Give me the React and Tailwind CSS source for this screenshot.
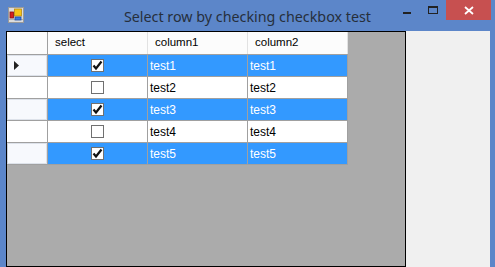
import React from 'react'

const ROWS = [
  { checked: true, c1: 'test1', c2: 'test1', selected: true, current: true },
  { checked: false, c1: 'test2', c2: 'test2', selected: false },
  { checked: true, c1: 'test3', c2: 'test3', selected: true },
  { checked: false, c1: 'test4', c2: 'test4', selected: false },
  { checked: true, c1: 'test5', c2: 'test5', selected: true },
]

function AppIcon() {
  return (
    <svg width="16" height="16" viewBox="0 0 16 16">
      <rect x="0.5" y="0.5" width="15" height="15" fill="#dcdcdc" stroke="#9a9a9a" />
      <line x1="1" y1="12.5" x2="15" y2="12.5" stroke="#b0b0b0" />
      <rect x="2" y="5" width="3.5" height="6" fill="#d42020" stroke="#8a1010" strokeWidth="0.8" />
      <rect x="6.5" y="2" width="7" height="7" fill="#f6c418" stroke="#b88a10" strokeWidth="0.8" />
      <rect x="7" y="10" width="6" height="3" fill="#3d7be0" stroke="#1d4fa8" strokeWidth="0.8" />
    </svg>
  )
}

function CheckBox({ checked }) {
  return (
    <div className="w-[13px] h-[13px] border border-[#707070] bg-white flex items-center justify-center">
      {checked && (
        <svg width="11" height="11" viewBox="0 0 11 11">
          <path d="M1.5 5.5 L4 8.5 L9.5 1.5" fill="none" stroke="#111" strokeWidth="2.2" />
        </svg>
      )}
    </div>
  )
}

export default function App() {
  return (
    <div className="w-[495px] h-[267px] bg-[#5c86c9] flex flex-col overflow-hidden" style={{ fontFamily: '"Liberation Sans", Arial, sans-serif' }}>
      {/* Title bar */}
      <div className="h-[31px] shrink-0 flex items-start">
        <div className="w-[101px] pl-[8px] pt-[7px]">
          <AppIcon />
        </div>
        <div className="flex-1 text-center pt-[6px] text-[14.3px] text-[#262f3c] whitespace-nowrap" style={{ fontFamily: '"Noto Sans", sans-serif' }}>
          Select row by checking checkbox test
        </div>
        <div className="w-[101px] flex items-start">
          <div className="w-[26px] h-[20px] flex items-center justify-center">
            <div className="w-[8px] h-[2px] bg-[#222] mt-[6px]" />
          </div>
          <div className="w-[26px] h-[20px] flex items-center justify-center">
            <div className="w-[10px] h-[8px] border border-[#222] border-t-2 -mt-[1px]" />
          </div>
          <div className="w-[45px] h-[20px] bg-[#c75050] flex items-center justify-center">
            <svg width="10" height="9" viewBox="0 0 10 9">
              <path d="M1 1 L9 8 M9 1 L1 8" stroke="#fff" strokeWidth="1.8" />
            </svg>
          </div>
        </div>
      </div>

      {/* Client area */}
      <div className="flex-1 flex pl-[6px] pr-[5px]">
        <div className="w-[400px] border border-black bg-[#ababab] text-[12px]">
          {/* Header */}
          <div className="flex h-[23px] bg-[#fcfcfc] w-[341px] border-b border-[#a0a0a0]">
            <div className="w-[41px] border-r border-[#a0a0a0]" />
            <div className="w-[100px] border-r border-[#e2e2e2] pl-[7px] flex items-center text-[11.5px] text-black">select</div>
            <div className="w-[100px] border-r border-[#e2e2e2] pl-[7px] flex items-center text-[11.5px] text-black">column1</div>
            <div className="w-[100px] border-r border-[#e2e2e2] pl-[7px] flex items-center text-[11.5px] text-black">column2</div>
          </div>
          {ROWS.map((r, i) => (
            <div key={i} className="flex h-[22px] w-[341px] border-b border-[#a0a0a0]">
              <div className="w-[41px] border-r border-[#a0a0a0] bg-white">
                {r.selected ? (
                  <div className="h-full border border-[#dde2ea] border-l-[#c9d0db] bg-[#f7f9fd] flex items-center pl-[6px]">
                    {r.current && (
                      <svg width="5" height="9" viewBox="0 0 5 9">
                        <path d="M0 0 L5 4.5 L0 9 Z" fill="#222" />
                      </svg>
                    )}
                  </div>
                ) : null}
              </div>
              <div className={`w-[100px] border-r border-[#a0a0a0] flex items-center justify-center ${r.selected ? 'bg-[#3399ff]' : 'bg-white'}`}>
                <CheckBox checked={r.checked} />
              </div>
              <div className={`w-[100px] border-r border-[#a0a0a0] pl-[2px] flex items-center ${r.selected ? 'bg-[#3399ff] text-white' : 'bg-white text-black'}`}>
                {r.c1}
              </div>
              <div className={`w-[100px] border-r border-[#a0a0a0] pl-[2px] flex items-center ${r.selected ? 'bg-[#3399ff] text-white' : 'bg-white text-black'}`}>
                {r.c2}
              </div>
            </div>
          ))}
        </div>
        <div className="flex-1 bg-[#f0f0f0]" />
      </div>
    </div>
  )
}
